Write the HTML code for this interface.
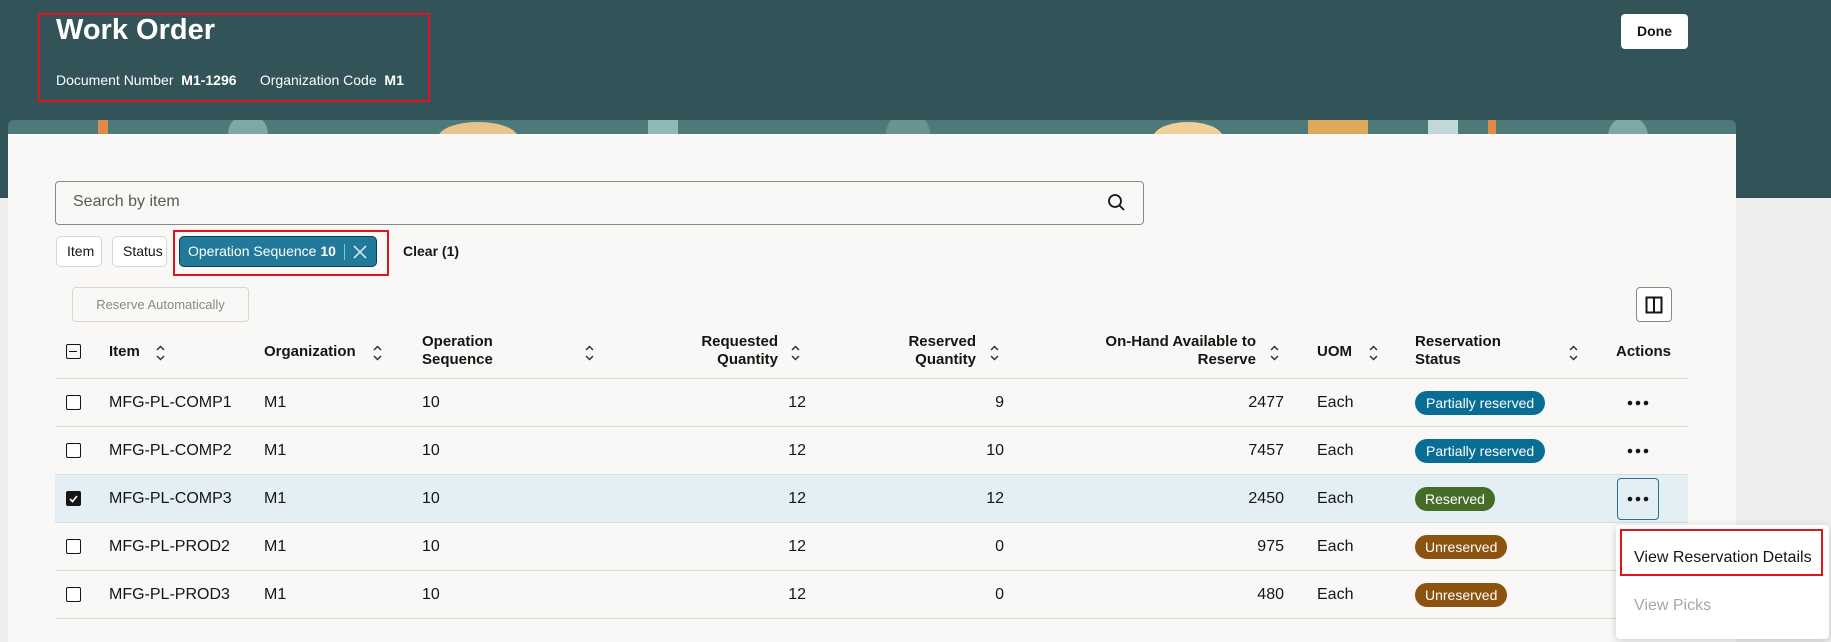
<!DOCTYPE html>
<html><head><meta charset="utf-8">
<style>
*{box-sizing:border-box;margin:0;padding:0}
body{width:1831px;height:642px;overflow:hidden;background:#efeeec;font-family:"Liberation Sans",sans-serif;color:#161513;position:relative}
.abs{position:absolute}
.hdr{left:0;top:0;width:1831px;height:198px;background:#325357}
.banner{left:8px;top:120px;width:1728px;height:16px;border-radius:6px 6px 0 0;overflow:hidden;background:#4d7a78}
.card{left:8px;top:134px;width:1728px;height:508px;background:#f9f8f6}
.t{white-space:nowrap}
.chip{top:236px;height:31px;border:1px solid #d9d6d2;border-radius:5px;background:#fff;font-size:14px;line-height:29px;padding:0 10px}
.hd{font-size:15px;font-weight:bold;line-height:18px}
.cell{font-size:16px}
.line{left:55px;width:1633px;height:1px;background:#dedcd8}
.cb{width:15px;height:15px;border:1.5px solid #161513;border-radius:2px;background:#fff}
.badge{height:24px;border-radius:12px;color:#fff;font-size:14px;line-height:24px;padding:0 10px}
</style></head><body>
<div class="abs hdr"></div>
<div class="abs banner">
 <svg width="1728" height="16">
  <rect x="90" y="0" width="10" height="16" fill="#e08a4a"/>
  <circle cx="240" cy="14" r="20" fill="#7fa7a5"/>
  <ellipse cx="470" cy="18" rx="40" ry="16" fill="#e8c48c"/>
  <rect x="640" y="0" width="30" height="16" fill="#8fb8b6"/>
  <ellipse cx="1180" cy="18" rx="35" ry="16" fill="#f0cf98"/>
  <rect x="1300" y="0" width="60" height="16" fill="#e0a85a"/>
  <rect x="1420" y="0" width="30" height="16" fill="#c0d8da"/>
  <rect x="1480" y="0" width="8" height="16" fill="#e08a4a"/>
  <circle cx="900" cy="14" r="22" fill="#6a9290"/>
  <circle cx="1620" cy="16" r="20" fill="#7fa7a5"/>
 </svg>
</div>
<div class="abs card"></div>

<div class="abs t" style="left:56px;top:14px;color:#fff;font-size:29px;font-weight:bold">Work Order</div>
<div class="abs t" style="left:56px;top:72px;color:#fff;font-size:14px">Document Number&nbsp; <b>M1-1296</b> &nbsp;&nbsp;&nbsp;&nbsp;&nbsp;Organization Code&nbsp; <b>M1</b></div>
<div class="abs" style="left:38px;top:13px;width:392px;height:89px;border:2px solid #e0141e"></div>
<div class="abs t" style="left:1621px;top:14px;width:67px;height:35px;background:#fff;border-radius:4px;font-size:14px;font-weight:bold;text-align:center;line-height:35px">Done</div>

<div class="abs" style="left:55px;top:181px;width:1089px;height:44px;border:1px solid #8b8985;border-radius:4px;background:#f9f8f6"></div>
<div class="abs t" style="left:73px;top:193px;font-size:16px;color:#5a5855">Search by item</div>
<svg class="abs" style="left:1107px;top:193px" width="20" height="20"><circle cx="8" cy="8" r="6" fill="none" stroke="#161513" stroke-width="1.8"/><line x1="12.5" y1="12.5" x2="17" y2="17" stroke="#161513" stroke-width="1.8"/></svg>

<div class="abs chip t" style="left:56px;width:46px">Item</div>
<div class="abs chip t" style="left:112px;width:55px">Status</div>
<div class="abs chip t" style="left:179px;width:198px;background:#227a9a;border-color:#0f3a4a;color:#fff;padding-left:8px">Operation Sequence <b>10</b><span style="position:absolute;left:164px;top:7px;width:1px;height:16px;background:#8fc2d4"></span><svg style="position:absolute;left:172px;top:7px" width="16" height="16"><path d="M2 2L14 14M14 2L2 14" stroke="#cfe6ef" stroke-width="1.6"/></svg></div>
<div class="abs" style="left:173px;top:230px;width:216px;height:46px;border:2px solid #e0141e"></div>
<div class="abs t" style="left:403px;top:243px;font-size:14px;font-weight:bold">Clear (1)</div>

<div class="abs t" style="left:72px;top:287px;width:177px;height:35px;border:1px solid #d9d6d2;border-radius:4px;font-size:13px;color:#8b8985;text-align:center;line-height:33px">Reserve Automatically</div>
<div class="abs" style="left:1636px;top:287px;width:36px;height:35px;border:1px solid #8b8985;border-radius:4px;background:#fff"></div>
<svg class="abs" style="left:1645px;top:296px" width="18" height="18"><rect x="1.5" y="1.5" width="15" height="15" fill="none" stroke="#161513" stroke-width="2"/><line x1="9" y1="1" x2="9" y2="17" stroke="#161513" stroke-width="2"/></svg>

<div class="abs cb" style="left:66px;top:344px;background:transparent"><div style="position:absolute;left:2px;top:5.5px;width:8px;height:1.5px;background:#161513"></div></div>
<div class="abs hd t" style="left:109px;top:343px">Item</div>
<div class="abs hd t" style="left:264px;top:343px">Organization</div>
<div class="abs hd" style="left:422px;top:333px">Operation<br>Sequence</div>
<div class="abs hd" style="left:600px;top:333px;width:178px;text-align:right">Requested<br>Quantity</div>
<div class="abs hd" style="left:800px;top:333px;width:176px;text-align:right">Reserved<br>Quantity</div>
<div class="abs hd" style="left:1000px;top:333px;width:256px;text-align:right">On-Hand Available to<br>Reserve</div>
<div class="abs hd t" style="left:1317px;top:343px">UOM</div>
<div class="abs hd" style="left:1415px;top:333px">Reservation<br>Status</div>
<div class="abs hd t" style="left:1616px;top:343px">Actions</div>
<svg class="abs" width="1831" height="642" style="left:0;top:0;pointer-events:none">
 <g fill="none" stroke="#333" stroke-width="1.5">
  <path d="M157 350l3.5-3.5 3.5 3.5M157 356l3.5 3.5 3.5-3.5"/>
  <path d="M374 350l3.5-3.5 3.5 3.5M374 356l3.5 3.5 3.5-3.5"/>
  <path d="M586 350l3.5-3.5 3.5 3.5M586 356l3.5 3.5 3.5-3.5"/>
  <path d="M792 350l3.5-3.5 3.5 3.5M792 356l3.5 3.5 3.5-3.5"/>
  <path d="M991 350l3.5-3.5 3.5 3.5M991 356l3.5 3.5 3.5-3.5"/>
  <path d="M1271 350l3.5-3.5 3.5 3.5M1271 356l3.5 3.5 3.5-3.5"/>
  <path d="M1370 350l3.5-3.5 3.5 3.5M1370 356l3.5 3.5 3.5-3.5"/>
  <path d="M1570 350l3.5-3.5 3.5 3.5M1570 356l3.5 3.5 3.5-3.5"/>
 </g>
</svg>
<div class="abs line" style="top:378px"></div>

<div class="abs" style="left:55px;top:475px;width:1633px;height:47px;background:#e4eff5"></div>
<div class="abs line" style="top:426px"></div>
<div class="abs line" style="top:474px"></div>
<div class="abs line" style="top:522px"></div>
<div class="abs line" style="top:570px"></div>
<div class="abs line" style="top:618px"></div>

<div class="abs cb" style="left:66px;top:395px"></div>
<div class="abs cb" style="left:66px;top:443px"></div>
<div class="abs cb" style="left:66px;top:491px;background:#161513"><svg style="position:absolute;left:1px;top:1px" width="11" height="11"><path d="M2 6l2.5 2.5L9 3" stroke="#fff" stroke-width="1.6" fill="none"/></svg></div>
<div class="abs cb" style="left:66px;top:539px"></div>
<div class="abs cb" style="left:66px;top:587px"></div>

<div class="abs cell t" style="left:109px;top:394px">MFG-PL-COMP1</div>
<div class="abs cell t" style="left:109px;top:442px">MFG-PL-COMP2</div>
<div class="abs cell t" style="left:109px;top:490px">MFG-PL-COMP3</div>
<div class="abs cell t" style="left:109px;top:538px">MFG-PL-PROD2</div>
<div class="abs cell t" style="left:109px;top:586px">MFG-PL-PROD3</div>

<div class="abs cell" style="left:264px;top:394px">M1</div>
<div class="abs cell" style="left:264px;top:442px">M1</div>
<div class="abs cell" style="left:264px;top:490px">M1</div>
<div class="abs cell" style="left:264px;top:538px">M1</div>
<div class="abs cell" style="left:264px;top:586px">M1</div>

<div class="abs cell" style="left:422px;top:394px">10</div>
<div class="abs cell" style="left:422px;top:442px">10</div>
<div class="abs cell" style="left:422px;top:490px">10</div>
<div class="abs cell" style="left:422px;top:538px">10</div>
<div class="abs cell" style="left:422px;top:586px">10</div>

<div class="abs cell" style="left:706px;width:100px;text-align:right;top:394px">12</div>
<div class="abs cell" style="left:706px;width:100px;text-align:right;top:442px">12</div>
<div class="abs cell" style="left:706px;width:100px;text-align:right;top:490px">12</div>
<div class="abs cell" style="left:706px;width:100px;text-align:right;top:538px">12</div>
<div class="abs cell" style="left:706px;width:100px;text-align:right;top:586px">12</div>

<div class="abs cell" style="left:904px;width:100px;text-align:right;top:394px">9</div>
<div class="abs cell" style="left:904px;width:100px;text-align:right;top:442px">10</div>
<div class="abs cell" style="left:904px;width:100px;text-align:right;top:490px">12</div>
<div class="abs cell" style="left:904px;width:100px;text-align:right;top:538px">0</div>
<div class="abs cell" style="left:904px;width:100px;text-align:right;top:586px">0</div>

<div class="abs cell" style="left:1184px;width:100px;text-align:right;top:394px">2477</div>
<div class="abs cell" style="left:1184px;width:100px;text-align:right;top:442px">7457</div>
<div class="abs cell" style="left:1184px;width:100px;text-align:right;top:490px">2450</div>
<div class="abs cell" style="left:1184px;width:100px;text-align:right;top:538px">975</div>
<div class="abs cell" style="left:1184px;width:100px;text-align:right;top:586px">480</div>

<div class="abs cell" style="left:1317px;top:394px">Each</div>
<div class="abs cell" style="left:1317px;top:442px">Each</div>
<div class="abs cell" style="left:1317px;top:490px">Each</div>
<div class="abs cell" style="left:1317px;top:538px">Each</div>
<div class="abs cell" style="left:1317px;top:586px">Each</div>

<div class="abs badge t" style="left:1415px;top:391px;background:#086e94;padding:0 11px">Partially reserved</div>
<div class="abs badge t" style="left:1415px;top:439px;background:#086e94;padding:0 11px">Partially reserved</div>
<div class="abs badge t" style="left:1415px;top:487px;background:#456d28">Reserved</div>
<div class="abs badge t" style="left:1415px;top:535px;background:#8c520f">Unreserved</div>
<div class="abs badge t" style="left:1415px;top:583px;background:#8c520f">Unreserved</div>

<div class="abs" style="left:1617px;top:478px;width:42px;height:42px;border:1px solid #2e6f8e;border-radius:4px"></div>
<svg class="abs" width="1831" height="642" style="left:0;top:0">
 <g fill="#161513">
  <circle cx="1630" cy="403" r="2.3"/><circle cx="1638" cy="403" r="2.3"/><circle cx="1646" cy="403" r="2.3"/>
  <circle cx="1630" cy="451" r="2.3"/><circle cx="1638" cy="451" r="2.3"/><circle cx="1646" cy="451" r="2.3"/>
  <circle cx="1630" cy="499" r="2.3"/><circle cx="1638" cy="499" r="2.3"/><circle cx="1646" cy="499" r="2.3"/>
 </g>
</svg>

<div class="abs" style="left:1616px;top:525px;width:213px;height:114px;background:#fff;border-radius:4px;box-shadow:0 2px 8px rgba(0,0,0,.18)"></div>
<div class="abs" style="left:1620px;top:529px;width:203px;height:47px;border:2px solid #e0141e"></div>
<div class="abs t" style="left:1634px;top:549px;font-size:16px">View Reservation Details</div>
<div class="abs t" style="left:1634px;top:597px;font-size:16px;color:#a9a7a3">View Picks</div>
</body></html>
